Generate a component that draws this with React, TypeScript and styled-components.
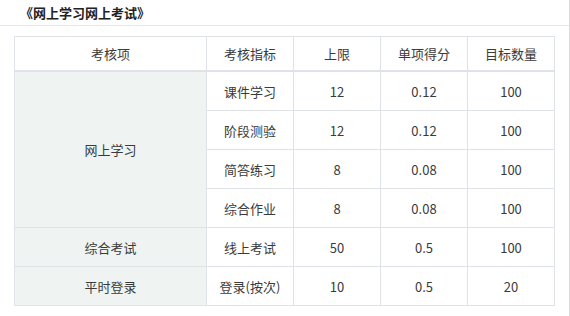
import React from "react";
import styled, { createGlobalStyle } from "styled-components";

const Global = createGlobalStyle`
  html, body { margin: 0; padding: 0; background: #fff; }
  body { font-family: "Noto Sans CJK SC", "Noto Sans", sans-serif; color: #333; }
`;

const Page = styled.div`
  position: relative;
  width: 570px;
  height: 316px;
  overflow: hidden;
  border-right: 1px solid #dcdcdc;
  box-sizing: border-box;
`;

const TitleBar = styled.div`
  height: 26px;
  box-sizing: border-box;
  border-bottom: 1px solid #e8e8e8;
  padding-left: 20px;
  display: flex;
  align-items: center;
  font-size: 13px;
  font-weight: 700;
  color: #222;
`;

const TableWrap = styled.div`
  padding: 10px 0 0 14px;
`;

const Table = styled.table`
  border-collapse: collapse;
  table-layout: fixed;
  width: 541px;
  font-size: 13px;
  color: #3a3a3a;
`;

const Col = styled.col<{ $w: number }>`
  width: ${(p) => p.$w}px;
`;

const Th = styled.th`
  height: 33px;
  padding: 0;
  font-weight: 400;
  text-align: center;
  border: 1px solid #dfe2e6;
  border-bottom: 2px solid #dfe2e6;
  background: #fff;
`;

const Td = styled.td<{ $group?: boolean }>`
  height: 38px;
  padding: 0;
  text-align: center;
  vertical-align: middle;
  border: 1px solid #dfe2e6;
  background: ${(p) => (p.$group ? "#eff4f2" : "#fff")};
`;

type Row = { item: string; max: string; score: string; target: string };

const groups: { name: string; rows: Row[] }[] = [
  {
    name: "网上学习",
    rows: [
      { item: "课件学习", max: "12", score: "0.12", target: "100" },
      { item: "阶段测验", max: "12", score: "0.12", target: "100" },
      { item: "简答练习", max: "8", score: "0.08", target: "100" },
      { item: "综合作业", max: "8", score: "0.08", target: "100" },
    ],
  },
  {
    name: "综合考试",
    rows: [{ item: "线上考试", max: "50", score: "0.5", target: "100" }],
  },
  {
    name: "平时登录",
    rows: [{ item: "登录(按次)", max: "10", score: "0.5", target: "20" }],
  },
];

export default function App() {
  return (
    <Page>
      <Global />
      <TitleBar>《网上学习网上考试》</TitleBar>
      <TableWrap>
        <Table>
          <colgroup>
            <Col $w={192} />
            <Col $w={87} />
            <Col $w={87} />
            <Col $w={87} />
            <Col $w={87} />
          </colgroup>
          <thead>
            <tr>
              <Th>考核项</Th>
              <Th>考核指标</Th>
              <Th>上限</Th>
              <Th>单项得分</Th>
              <Th>目标数量</Th>
            </tr>
          </thead>
          <tbody>
            {groups.map((g) =>
              g.rows.map((r, i) => (
                <tr key={g.name + r.item}>
                  {i === 0 && (
                    <Td $group rowSpan={g.rows.length}>
                      {g.name}
                    </Td>
                  )}
                  <Td>{r.item}</Td>
                  <Td>{r.max}</Td>
                  <Td>{r.score}</Td>
                  <Td>{r.target}</Td>
                </tr>
              ))
            )}
          </tbody>
        </Table>
      </TableWrap>
    </Page>
  );
}
